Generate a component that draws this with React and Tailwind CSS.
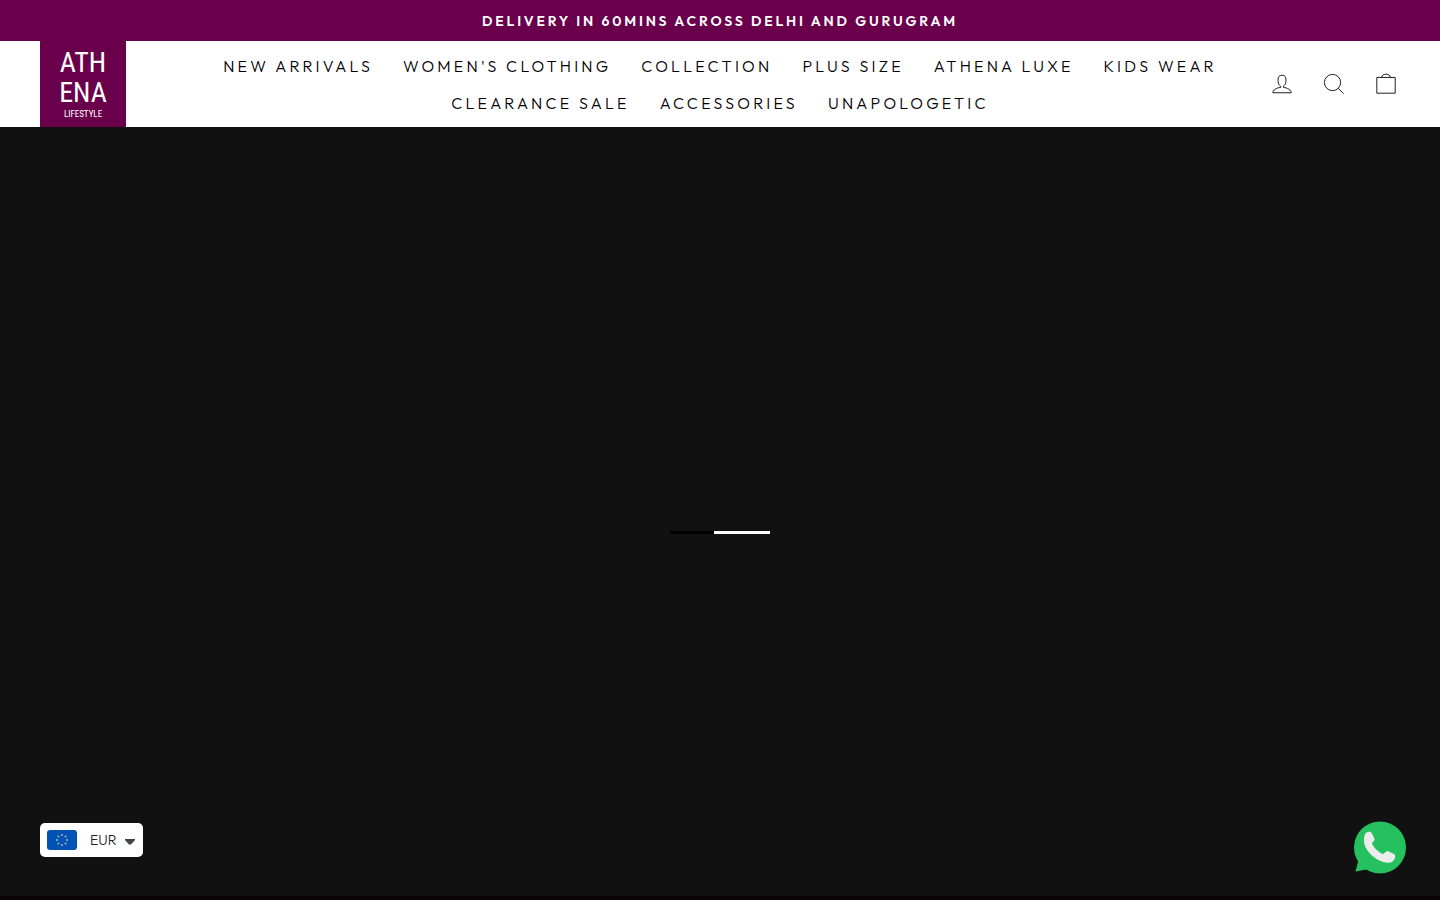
import React from "react";

const rows = [
  ["New Arrivals", "Women's Clothing", "Collection", "Plus Size", "Athena Luxe", "Kids Wear"],
  ["Clearance Sale", "Accessories", "Unapologetic"],
];

function Logo() {
  return (
    <a
      href="#home"
      aria-label="Athena Lifestyle"
      className="flex w-[86px] shrink-0 flex-col items-center justify-center self-stretch bg-[#6a004b] font-['Roboto_Condensed','DejaVu_Sans_Condensed',sans-serif] text-white"
    >
      <span className="text-[28px] leading-[30px]">ATH</span>
      <span className="text-[28px] leading-[30px]">ENA</span>
      <span className="text-[9px] leading-[12px]">LIFESTYLE</span>
    </a>
  );
}

function IconButton({ label, children }) {
  return (
    <button type="button" aria-label={label} className="flex size-[52px] items-center justify-center">
      <svg viewBox="0 0 64 64" className="size-7 fill-none stroke-black stroke-2">
        {children}
      </svg>
    </button>
  );
}

function EuFlag() {
  const stars = Array.from({ length: 8 }, (_, i) => {
    const a = (i * Math.PI) / 4;
    return [15 + 5 * Math.cos(a), 10 + 5 * Math.sin(a)];
  });
  return (
    <svg viewBox="0 0 30 20" className="h-5 w-[30px]" aria-hidden="true">
      <rect width="30" height="20" rx="3" fill="#0052b4" />
      {stars.map(([x, y], i) => (
        <circle key={i} cx={x} cy={y} r="1" fill="#a9b7a0" />
      ))}
    </svg>
  );
}

export default function App() {
  return (
    <div className="flex min-h-screen flex-col bg-[#111] font-[Outfit,Lato,sans-serif]">
      <div className="bg-[#6a004b] px-10 pt-[11px] pb-[9px] text-center text-[14px] leading-[21px] font-semibold tracking-[0.2em] text-white">
        DELIVERY IN 60MINS ACROSS DELHI AND GURUGRAM
      </div>

      <header className="flex min-h-[86px] items-center bg-white px-10">
        <Logo />
        <nav aria-label="Main" className="flex flex-1 flex-col pt-[2px] pl-[58px] font-light text-black">
          {rows.map((row) => (
            <ul key={row[0]} className="flex flex-wrap justify-center">
              {row.map((item) => (
                <li key={item}>
                  <a href="#shop" className="block px-[15px] text-[16px] leading-[37px] tracking-[0.2em] whitespace-nowrap uppercase">
                    {item}
                  </a>
                </li>
              ))}
            </ul>
          ))}
        </nav>
        <div className="-mr-3 flex">
          <IconButton label="Log in">
            <path d="M35 39.84v-2.53c3.3-1.91 6-6.66 6-11.41 0-7.63 0-13.82-9-13.82s-9 6.19-9 13.82c0 4.75 2.7 9.51 6 11.41v2.53c-10.18.85-18 6-18 12.16h42c0-6.19-7.82-11.31-18-12.16z" />
          </IconButton>
          <IconButton label="Search">
            <path d="M47.16 28.58A18.58 18.58 0 1 1 28.58 10a18.58 18.58 0 0 1 18.58 18.58zM54 54L41.94 42" />
          </IconButton>
          <IconButton label="Cart">
            <path d="M11 17h42v36H11zM22 17c0-10 20-10 20 0" />
          </IconButton>
        </div>
      </header>

      <main className="flex flex-1 flex-col items-center justify-center border-b-4 border-[#0b0308] pt-[42px]">
        <div role="progressbar" aria-label="Loading" className="flex h-[3px] w-[100px] justify-end bg-black">
          <div className="w-14 bg-white" />
        </div>
      </main>

      <button
        type="button"
        aria-label="Currency: EUR"
        className="fixed bottom-[43px] left-10 flex h-[34px] w-[103px] items-center rounded-[5px] bg-white pl-[7px] text-[14px] font-light text-[#222]"
      >
        <EuFlag />
        <span className="ml-[13px]">EUR</span>
        <svg viewBox="0 0 10 6" className="mt-[3px] ml-2 h-[6px] w-[10px]" aria-hidden="true">
          <path d="M0 0h10v1L6 5.5H4L0 1z" fill="#444" />
        </svg>
      </button>

      <a href="#whatsapp" aria-label="Chat on WhatsApp" className="fixed right-[34px] bottom-[26px]">
        <svg viewBox="0 0 53 53" className="size-[53px]">
          <circle cx="27" cy="26.500" r="26" fill="#25c15f" />
          <path d="M5.500 39L2.500 50.500 16 48z" fill="#25c15f" />
          <path d="M12 13c2-3 6-3 7-.5l2.500 5.500c.5 1.500-2.500 3.500-2.500 4.500 1.500 4 6 8.500 11 10.500 1.500-.5 3-3 4.500-3l6.500 3c2.500 1.500 1 5.500-1.500 7.500-8 5.500-29.500-8-28.500-22 0-2 .3-3.500 1-5z" fill="#ececec" />
        </svg>
      </a>
    </div>
  );
}
